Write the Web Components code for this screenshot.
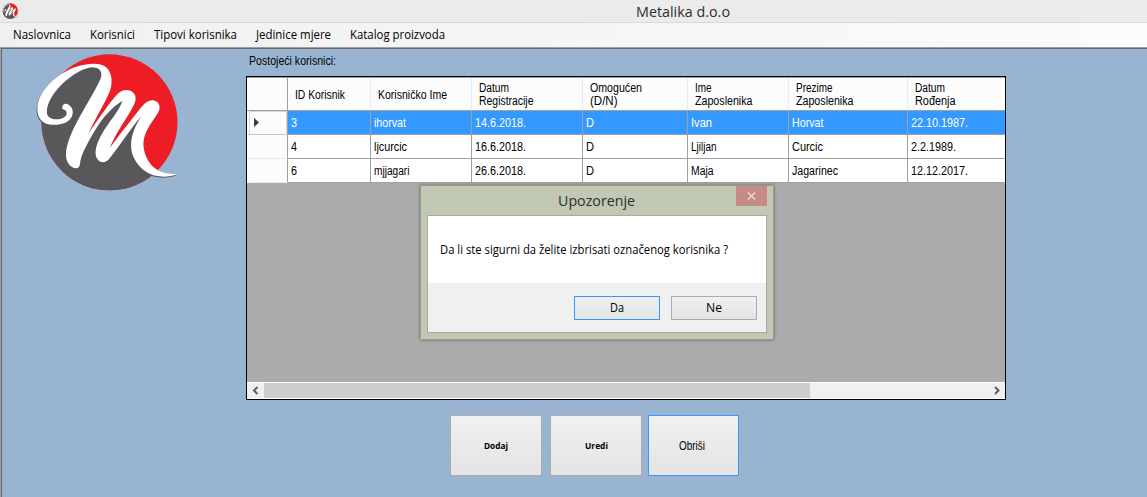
<!DOCTYPE html>
<html lang="hr">
<head>
<meta charset="utf-8">
<title>Metalika d.o.o</title>
<style>
html,body{margin:0;height:100%;overflow:hidden}
body{font-family:"Liberation Sans",sans-serif;color:#000}
</style>
</head>
<body>
<app-window></app-window>
<script>
const define = (name, html, ready) => customElements.define(name, class extends HTMLElement {
  constructor() {
    super();
    this.attachShadow({mode: 'open'}).innerHTML = html;
  }
  connectedCallback() { if (ready) ready(this, this.shadowRoot); }
});

/* One line of text condensed or widened to the width in "w". */
define('fit-text', `
<style>
:host{display:block;white-space:nowrap;flex:none}
span{display:inline-block;transform-origin:0 50%}
</style><span><slot></slot></span>`, (el, root) => {
  const span = root.querySelector('span');
  const w = parseFloat(el.getAttribute('w'));
  el.style.width = w + 'px';
  const natural = span.getBoundingClientRect().width;
  if (natural) span.style.transform = `scaleX(${w / natural})`;
});

define('brand-logo', `
<style>:host{display:block}svg{display:block;width:100%;height:100%}</style>
<svg viewBox="18 11 427 411">
  <defs><clipPath id="c"><circle cx="239" cy="216" r="204.500"/></clipPath>
  <path id="m" d="M97 170C97 162 105 158 112 161C128 169 133 184 125 200C115 219 90 225 62 223C35 220 20 201 22 170C27 118 82 70 134 50C160 42 190 37 212 42C241 49 249 79 244 108C237 140 207 183 175 250C207 205 239 157 263 131C276 118 291 116 304 122C319 130 321 147 313 162C297 196 257 246 240 293C271 251 307 205 337 168C351 151 366 146 380 153C392 161 393 175 383 190C362 222 341 247 341 283C342 315 359 346 384 360C402 369 423 373 443 371C424 379 401 382 378 377C339 367 306 331 304 290C303 253 317 226 335 198C302 235 270 287 239 325C226 342 207 338 199 320C192 297 206 266 225 236C246 205 271 175 278 151C242 174 219 202 196 239C178 269 158 305 152 329C150 338 152 348 143 353C130 357 113 344 109 324C104 294 121 255 139 219C161 176 195 124 212 85C220 64 210 50 185 50C145 55 94 96 68 135C50 163 46 188 56 199C70 212 98 208 108 196C114 187 108 178 97 176Z"/></defs>
  <circle cx="239" cy="216" r="204.500" fill="#ee1c25"/>
  <path clip-path="url(#c)" fill="#58585a" d="M60 95C110 55 150 45 185 45C235 45 238 80 228 115L176 249L290 132L305 150L241 291L365 162L368 205C330 240 315 300 345 340L380 374L300 440H0V150Z"/>
  <use href="#m" fill="#58585a" transform="translate(-2 3)"/>
  <use href="#m" fill="#fff"/>
</svg>`);

define('title-bar', `
<style>
:host{display:grid;grid-template-columns:636px 1fr;height:22px;background:#ebebeb;border-bottom:1px solid #d9d9d9;font:15px/22px "Open Sans",sans-serif;color:#2e2e2e}
brand-logo{width:16px;height:16px;margin:3px 0 0 2px}
</style>
<brand-logo></brand-logo><div><slot></slot></div>`);

define('menu-bar', `
<style>
:host{display:flex;height:24px;padding-left:13px;background:linear-gradient(90deg,#f0f0f0,#fbfbfb);font:12px/24px "Open Sans",sans-serif;gap:19px}
</style><slot></slot>`);

define('grid-head', `
<style>
:host{display:flex;flex-direction:column;justify-content:center;box-sizing:border-box;height:34px;padding:2px 0 0 7px;background:#fcfcfc;border-top:1px solid #a0a0a0;border-bottom:1px solid #a0a0a0;line-height:13px;box-shadow:inset -1px 0 #e3edf8}
:host([corner]){box-shadow:inset -1px 0 #a0a0a0}
:host([last]){box-shadow:none}
</style><slot></slot>`);

define('grid-cell', `
<style>
:host{display:flex;align-items:center;box-sizing:border-box;height:24px;padding-left:3px;background:#fff;border-right:1px solid #a0a0a0;border-bottom:1px solid #a0a0a0}
:host([last]){border-right:0}
:host([sel]){background:#3399ff;color:#fff}
</style><slot></slot>`);

define('row-head', `
<style>
:host{display:flex;align-items:center;box-sizing:border-box;height:24px;background:#fcfcfc;border-right:1px solid #a0a0a0;border-bottom:1px solid #e3edf8;padding-left:5px;border-left:2px solid #fff}
:host([sel]){border-bottom-color:#b9cbe0;box-shadow:inset 1px 1px #cbd9ea,inset -1px 0 #cbd9ea}
svg{display:none}:host([sel]) svg{display:block}
</style><svg width="5" height="9"><path d="M0 0L5 4.500L0 9Z" fill="#3a3a3a"/></svg>`);

define('h-scroll', `
<style>
:host{display:flex;box-sizing:border-box;height:17px;background:#f0f0f0;border-top:1px solid #fff;border-bottom:1px solid #fff}
svg{flex:none;width:17px;height:15px}
div{width:546px;background:#cdcdcd}
i{flex:1}
</style>
<svg viewBox="0 0 17 15"><path d="M10.500 4L7 7.500L10.500 11" fill="none" stroke="#606060" stroke-width="2"/></svg><div></div><i></i>
<svg viewBox="0 0 17 15"><path d="M7 4L10.500 7.500L7 11" fill="none" stroke="#606060" stroke-width="2"/></svg>`);

define('data-grid', `
<style>
:host{display:flex;flex-direction:column;box-sizing:border-box;width:760px;height:324px;border:1px solid #000;background:#ababab;font-size:12px}
.g{display:grid;grid-template-columns:41px 83px 101px 111px 105px 101px 119px 97px;flex:1;align-content:start}
</style><div class="g"></div><h-scroll></h-scroll>`, (el, root) => {
  const heads = [[['ID Korisnik',50]],[['Korisničko Ime',69]],[['Datum',30],['Registracije',54.5]],[['Omogućen',52],['(D/N)',27.5]],[['Ime',16.5],['Zaposlenika',57.5]],[['Prezime',36.5],['Zaposlenika',57.5]],[['Datum',30],['Rođenja',40.5]]];
  const rows = [
    [['3',6],['ihorvat',32],['14.6.2018.',51],['D',8],['Ivan',21],['Horvat',31.5],['22.10.1987.',57]],
    [['4',6],['ljcurcic',33],['16.6.2018.',51],['D',8],['Ljiljan',25.5],['Curcic',31],['2.2.1989.',45]],
    [['6',6],['mjjagari',35.5],['26.6.2018.',51],['D',8],['Maja',22.5],['Jagarinec',46],['12.12.2017.',57]]];
  const fit = ([t, w]) => `<fit-text w="${w}">${t}</fit-text>`;
  const last = i => i === 6 ? ' last' : '';
  root.querySelector('.g').innerHTML = '<grid-head corner></grid-head>' +
    heads.map((h, i) => `<grid-head${last(i)}>${h.map(fit).join('')}</grid-head>`).join('') +
    rows.map((r, n) => { const s = n ? '' : ' sel';
      return `<row-head${s}></row-head>` + r.map((c, i) => `<grid-cell${s}${last(i)}>${fit(c)}</grid-cell>`).join('');
    }).join('');
});

define('push-button', `
<style>
:host{display:flex;align-items:center;justify-content:center;box-sizing:border-box;border:1px solid #acacac;background:linear-gradient(#f0f0f0,#e4e4e4)}
:host([focus]){border-color:#3399ff}
</style><slot></slot>`);

define('message-box', `
<style>
:host{display:flex;flex-direction:column;box-sizing:border-box;width:354px;height:155px;background:#c1c9b5;border:1px solid #969d8b;box-shadow:0 0 3px #0006;padding:0 6px 6px;font:12px/16px "Open Sans",sans-serif}
header{display:flex;height:29px;padding-left:131px;font-size:15px;line-height:28px;color:#2e2e2e}
.x{margin-left:auto;width:31px;height:20px;background:#c68b84;display:grid;place-items:center}
section{flex:1;display:flex;flex-direction:column;border:1px solid #a4ab98;background:#fff}
.msg{height:67px;padding-left:12px;display:flex;align-items:center}
footer{flex:1;background:#f0f0f0;display:flex;justify-content:flex-end;gap:11px;padding:13px 9px 0 0}
push-button{width:86px;height:24px}
</style>
<header><fit-text w="77">Upozorenje</fit-text><div class="x"><svg width="9" height="8"><path d="M.8.5L8.200 7.500M8.200.5L.8 7.500" stroke="#ead7d2" stroke-width="1.600"/></svg></div></header>
<section><div class="msg"><fit-text w="288">Da li ste sigurni da želite izbrisati označenog korisnika ?</fit-text></div>
<footer><push-button focus><fit-text w="14">Da</fit-text></push-button><push-button><fit-text w="16">Ne</fit-text></push-button></footer></section>`);

define('app-window', `
<style>
:host{display:flex;flex-direction:column;height:100vh;background:#99b4d1}
main{flex:1;display:grid;grid-template-columns:244px 1fr;border-top:1px solid #a0a0a0;border-left:1px solid #a0a0a0;box-shadow:inset 1px 1px #696969}
.logo{width:142px;height:137px;margin:6px 0 0 35px}
.content{padding-left:1px;display:flex;flex-direction:column}
.label{height:23px;padding:5px 0 0 3px;font-size:12px;line-height:16px}
.actions{display:flex;padding:15px 0 0 204px}
.actions push-button{width:92px;height:61px}
.small{font:bold 9px/12px "Open Sans",sans-serif}
message-box{position:absolute;left:420px;top:185px}
</style>
<title-bar><fit-text w="94">Metalika d.o.o</fit-text></title-bar>
<menu-bar><fit-text w="58">Naslovnica</fit-text><fit-text w="45">Korisnici</fit-text><fit-text w="83">Tipovi korisnika</fit-text><fit-text w="75">Jedinice mjere</fit-text><fit-text w="95">Katalog proizvoda</fit-text></menu-bar>
<main><brand-logo class="logo"></brand-logo>
<div class="content">
<div class="label"><fit-text w="87">Postojeći korisnici:</fit-text></div>
<data-grid></data-grid>
<div class="actions"><push-button><fit-text class="small" w="24">Dodaj</fit-text></push-button><push-button style="margin:0 6px 0 8px"><fit-text class="small" w="23">Uredi</fit-text></push-button><push-button focus style="width:91px;font-size:12px;padding-right:3px"><fit-text w="26">Obriši</fit-text></push-button></div>
</div></main>
<message-box></message-box>`);
</script>
</body>
</html>
